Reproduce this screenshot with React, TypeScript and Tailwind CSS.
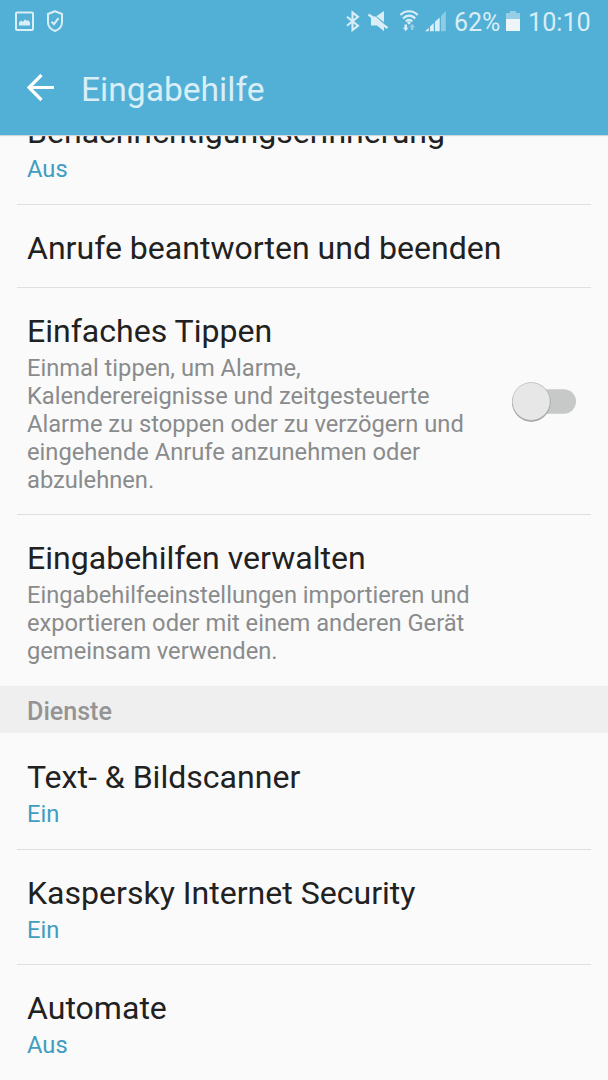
import type { ReactNode } from 'react';

type RowProps = {
  title: string;
  summary?: ReactNode;
  state?: string;
  last?: boolean;
  compact?: boolean;
  children?: ReactNode;
};

function Row({ title, summary, state, last, compact, children }: RowProps) {
  return (
    <section className="flex flex-col">
      <div className={`flex items-center justify-between pt-6 pr-8 pl-[27px] ${compact ? 'pb-5' : 'pb-[21px]'}`}>
        <div className="whitespace-nowrap">
          <h2 className="text-[32.06px] leading-[38px] text-[#212121]">{title}</h2>
          {state && <p className="mt-1 text-[23.7px] leading-7 text-[#419dc0]">{state}</p>}
          {summary && <p className="mt-1 text-[23.7px] leading-7 text-[#898b8c]">{summary}</p>}
        </div>
        {children}
      </div>
      {!last && <div className="mx-[17px] h-px bg-[#dfdfdf]" />}
    </section>
  );
}

function Toggle() {
  return (
    <button role="switch" aria-checked="false" aria-label="Einfaches Tippen" className="mb-[3px] block h-10 w-16">
      <svg viewBox="0 0 64 40" className="block h-10 w-16 overflow-visible">
        <rect x="14" y="7.2" width="50" height="24.5" rx="12.2" fill="#c6c9c8" />
        <circle cx="19.3" cy="20.5" r="19.2" fill="#8f8f8f" />
        <circle cx="19.3" cy="19.6" r="19.3" fill="#b8b8b8" />
        <circle cx="19.2" cy="19.4" r="18.5" fill="#e7e7e7" />
      </svg>
    </button>
  );
}

function StatusBar() {
  return (
    <div className="flex h-[43px] items-center justify-between pr-[13px] pl-[15px] text-[#d9eef6]">
      <svg width="50" height="24" viewBox="15 9.5 50 24" fill="none">
        <rect x="16" y="12" width="17" height="17.6" rx="1" stroke="currentColor" strokeWidth="2" />
        <path d="M19 25v-3l2-2 2 1.2 2-2.5 2 1.8 1.2-1L30 22v3z" fill="currentColor" />
        <path d="M55 10.7 62 13.5v8.5c0 4-3.2 7-7 8.5-3.8-1.5-7-4.5-7-8.5v-8.5z" stroke="currentColor" strokeWidth="2" />
        <path d="m51.5 21.2 2.5 2.5 4.5-6" stroke="currentColor" strokeWidth="2.1" />
      </svg>
      <div className="flex items-center">
        <svg width="110" height="26" viewBox="345 8.5 110 26" fill="none">
          <path d="m347 16.2 11 9-5.5 4.3V12l5.5 4.3-11 9" stroke="currentColor" strokeWidth="2.1" />
          <path d="M384 10.5v11.2l-7.7-6z" fill="currentColor" />
          <path d="M371 16h4.5L384 23.5v7.3l-7-5.8h-6z" fill="currentColor" />
          <path d="m368.5 14 19 13.5" stroke="currentColor" strokeWidth="2.4" />
          <path d="M400.4 14.5c4.8-5 12.5-5 17.3 0M403 18c3.5-3.8 8.8-3.8 12.2 0M405.8 21c2-2.2 4.5-2.2 6.5 0" stroke="currentColor" strokeWidth="2.1" />
          <path d="m407 22.3 2-1.7 2 1.7-2 1.9z" fill="currentColor" />
          <path d="M404.5 24v3.2H403l2.7 3.6 2.8-3.6H407V24z" fill="currentColor" />
          <path d="M411 29.5v-2.8h-1.8l3-3.5 3 3.5h-1.9v2.8z" fill="currentColor" opacity=".5" />
          <path d="m425 30.8 3.8-3.6v3.6zM430 26l3.8-3.5v8.3H430zM435 21.2l4.7-4.3v13.9H435z" fill="currentColor" />
          <path d="m441 15.6 4.8-5v20.2H441z" fill="currentColor" opacity=".45" />
        </svg>
        <span className="-ml-px w-[47px] pt-0.5 text-[25px] leading-7 whitespace-nowrap">62%</span>
        <svg className="ml-[5px]" width="14" height="22" viewBox="0 0 14 22" fill="currentColor">
          <path d="M0 2h4V0h6v2h4v6H0z" opacity=".5" />
          <path d="M0 8h14v12H0z" fill="#edf5f9" />
        </svg>
        <span className="ml-2 w-[67px] pt-0.5 text-[25.2px] leading-7 whitespace-nowrap">10:10</span>
      </div>
    </div>
  );
}

export default function App() {
  return (
    <div className="flex h-[1080px] w-[608px] flex-col overflow-hidden bg-[#fafafa] font-['Roboto',sans-serif]">
      <header className="z-10 h-[135px] shrink-0 bg-[#52afd5] shadow-[0_1px_1px_#d0d7da]">
        <StatusBar />
        <div className="flex h-[92px] items-center pl-[27px]">
          <svg className="mb-0.5 shrink-0" width="28" height="28" viewBox="0 0 28 28" fill="none" stroke="white" strokeWidth="3.2">
            <path d="M27 13.5H2M14.5 1 2 13.5 14.5 26" />
          </svg>
          <h1 className="mt-0.5 ml-[26px] text-[33.6px] leading-10 text-[#d9eef6]">Eingabehilfe</h1>
        </div>
      </header>
      <main className="flex min-h-0 flex-1 flex-col overflow-hidden">
        <div className="-mt-[46px]">
          <Row title="Benachrichtigungserinnerung" state="Aus" />
          <Row title="Anrufe beantworten und beenden" compact />
          <Row
            title="Einfaches Tippen"
            compact
            summary={<>Einmal tippen, um Alarme,<br />Kalenderereignisse und zeitgesteuerte<br />Alarme zu stoppen oder zu verzögern und<br />eingehende Anrufe anzunehmen oder<br />abzulehnen.</>}
          >
            <Toggle />
          </Row>
          <Row
            title="Eingabehilfen verwalten"
            summary={<>Eingabehilfeeinstellungen importieren und<br />exportieren oder mit einem anderen Gerät<br />gemeinsam verwenden.</>}
            last
          />
          <h3 className="mb-px h-[47px] bg-[#efefef] pl-[27px] text-[25.1px] leading-[51px] font-medium text-[#949494]">Dienste</h3>
          <Row title="Text- & Bildscanner" state="Ein" />
          <Row title="Kaspersky Internet Security" state="Ein" compact />
          <Row title="Automate" state="Aus" last />
        </div>
      </main>
    </div>
  );
}
